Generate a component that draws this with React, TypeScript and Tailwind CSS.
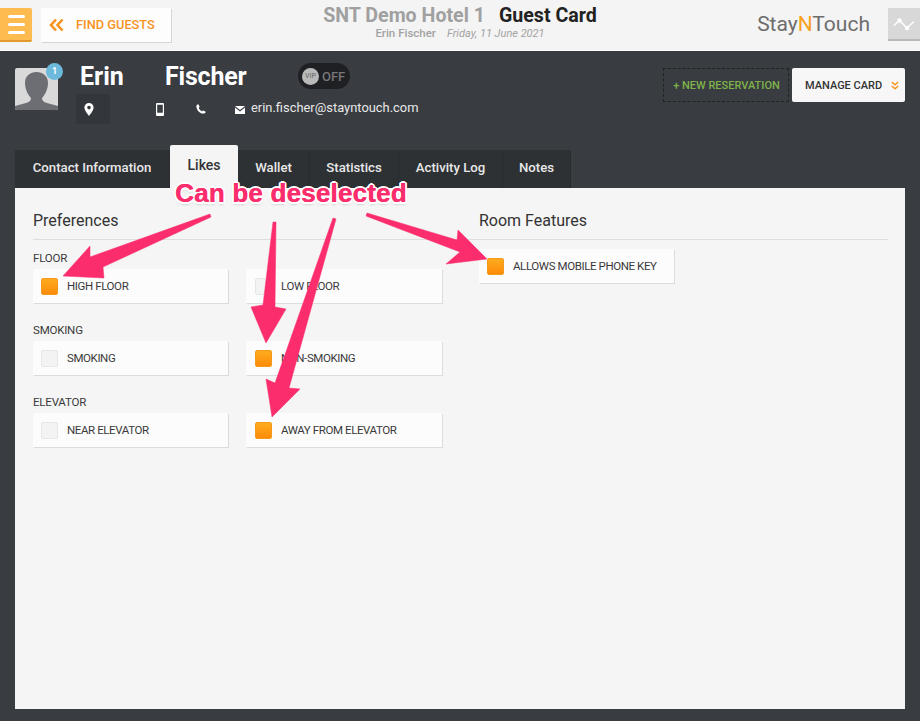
import React from "react";

const font = "font-['Roboto','Noto_Sans',sans-serif]";

function Check({ on }: { on?: boolean }) {
  return on ? (
    <span className="h-[17px] w-[17px] shrink-0 rounded-[2px] bg-gradient-to-b from-[#ffab1c] to-[#fb8b08] border border-[#f39a1d]" />
  ) : (
    <span className="h-[17px] w-[17px] shrink-0 rounded-[2px] bg-[#f3f3f3] border border-[#e6e6e6]" />
  );
}

function Card({ label, on }: { label: string; on?: boolean }) {
  return (
    <div className="flex h-[34px] items-center gap-[9px] whitespace-nowrap bg-[#fcfcfc] pl-2 pr-2 shadow-[1px_1px_0_#dcdcdc] text-[11.5px] leading-none tracking-[-0.4px] text-[#3a3a3a]">
      <Check on={on} />
      <span className="pt-[1px]">{label}</span>
    </div>
  );
}

function Group({ title, a, b }: { title: string; a: [string, boolean]; b: [string, boolean] }) {
  return (
    <div>
      <div className="h-[22px] pt-[3px] text-[11.5px] leading-[16px] tracking-[-0.2px] text-[#3a3a3a]">{title}</div>
      <div className="grid grid-cols-[195px_196px] gap-x-[18px] [&>*:last-child]:pl-[9px]">
        <Card label={a[0]} on={a[1]} />
        <Card label={b[0]} on={b[1]} />
      </div>
    </div>
  );
}

function Tab({ label, w, active }: { label: string; w: string; active?: boolean }) {
  return active ? (
    <div className={`${w} flex h-[43px] items-center justify-center rounded-t-[2px] bg-[#f5f5f5] pb-[3px] text-[14px] font-medium text-[#333]`}>{label}</div>
  ) : (
    <div className={`${w} flex h-[38px] items-center justify-center border-r border-[#292b2e] bg-[#2e3134] pb-[2px] text-[13.2px] font-medium text-[#e8e8e8]`}>{label}</div>
  );
}

function Arrows() {
  return (
    <svg className="pointer-events-none absolute left-0 top-0" width="920" height="721" viewBox="0 0 920 721">
      <g fill="#fb2d6d" stroke="#fb2d6d" strokeWidth="0.5" strokeLinejoin="round">
        <polygon points="210,214 211,217 103,267 104,278 63,276 90,246 90,257" />
        <polygon points="273,222 276,222 275,307 286,309 266,343 251,307 263,305" />
        <polygon points="333,218 336,219 289,388 300,389 272,417 266,379 275,383" />
        <polygon points="366,216 367,213 457,240 458,230 487,259 446,264 460,252" />
      </g>
    </svg>
  );
}

export default function App() {
  return (
    <div className={`${font} relative flex h-[721px] w-[920px] flex-col overflow-hidden bg-[#393c41]`}>
      {/* Top bar */}
      <header className="grid h-[51px] shrink-0 grid-cols-[1fr_auto_1fr] border-b border-b-white bg-[#f4f4f4]">
        <div className="flex items-start gap-[9px] pt-2">
          <div className="flex h-[34px] w-[32px] flex-col items-center justify-center gap-[5px] rounded-r-[2px] border-b-2 border-[#e09a30] bg-[#fdbb50]">
            <span className="h-[3px] w-[17px] rounded-full bg-white" />
            <span className="h-[3px] w-[17px] rounded-full bg-white" />
            <span className="h-[3px] w-[17px] rounded-full bg-white" />
          </div>
          <div className="flex h-[34px] w-[130px] items-center gap-[12px] bg-[#fdfdfd] pl-[8px] shadow-[1px_1px_0_#d5d5d5]">
            <svg width="15" height="14" viewBox="0 0 15 14" fill="none" stroke="#f7931e" strokeWidth="2.6" strokeLinejoin="miter">
              <path d="M7 1.5 2 7l5 5.5M13.5 1.5 8.5 7l5 5.5" />
            </svg>
            <span className="text-[12.8px] font-medium leading-none text-[#f7931e]">FIND GUESTS</span>
          </div>
        </div>
        <div className="flex flex-col items-center pt-[5px]">
          <div className="flex gap-[14px] text-[19.6px] font-bold leading-[22px]">
            <span className="text-[#a0a0a0]">SNT Demo Hotel 1</span>
            <span className="text-[#222]">Guest Card</span>
          </div>
          <div className="flex gap-[11px] text-[11.5px] leading-[13px] text-[#a3a3a3]">
            <span className="font-medium">Erin Fischer</span>
            <span className="italic text-[11px]">Friday, 11 June 2021</span>
          </div>
        </div>
        <div className="flex items-start justify-end gap-[18px] pt-2">
          <div className="pt-[3px] text-[21px] leading-[27px] text-[#6d6d6d]">
            Stay<span className="text-[#f7a11f]">N</span>Touch
          </div>
          <div className="flex h-[33px] w-[32px] items-center justify-center border-b-2 border-[#b9b9b9] bg-[#d8d8d8]">
            <svg width="22" height="14" viewBox="0 0 22 14" fill="none" stroke="#fff" strokeWidth="1.4">
              <path d="M1 8.5 6.5 3.5 14 11 21 4.5" />
              <circle cx="6.5" cy="3.5" r="1.5" fill="#fff" />
              <circle cx="14" cy="11" r="1.5" fill="#fff" />
            </svg>
          </div>
        </div>
      </header>

      {/* Guest head */}
      <section className="flex h-[94px] shrink-0 justify-between pl-[15px] pr-[15px]">
        <div className="flex">
          <div className="relative mt-[17px] h-[42px] w-[43px] shrink-0 overflow-hidden rounded-[2px] bg-[#d9d9d9]">
            <svg width="43" height="42" viewBox="0 0 43 42">
              <path d="M0 42V38l11-3c3-1 5-2 5-5-3-3-6-9-6-15C10 8 15 4 21.500 4S33 8 33 15c0 6-3 12-6 15 0 3 2 4 5 5l11 3v4Z" fill="#6c6e73" />
            </svg>
          </div>
          <div className="ml-[18px] pt-[9px]">
            <div className="flex h-[33px] items-center">
              <span className="w-[89px] pl-[4px] text-[25px] font-bold leading-none text-white">Erin</span>
              <span className="w-[133px] text-[25px] font-bold leading-none tracking-[-0.2px] text-white">Fischer</span>
              <div className="flex h-[26px] w-[52px] items-center gap-[3px] rounded-full bg-[#1f2023] pl-[4px] -mt-[1px]">
                <span className="flex h-[17px] w-[17px] items-center justify-center rounded-full bg-[#b9b9b9] text-[7px] leading-none text-[#666]">VIP</span>
                <span className="text-[13px] font-medium leading-none text-[#777]">OFF</span>
              </div>
            </div>
            <div className="mt-[1px] flex h-[30px] items-center">
              <div className="flex h-[30px] w-[34px] items-center pl-[8px] bg-[#33363a] rounded-[2px]">
                <svg width="10" height="13" viewBox="0 0 10 13"><path fillRule="evenodd" d="M5 0a4.600 4.600 0 0 1 4.600 4.600C9.600 7.800 5 13 5 13S.4 7.800.4 4.600A4.600 4.600 0 0 1 5 0Zm0 2.800a1.800 1.800 0 1 0 0 3.600 1.800 1.800 0 0 0 0-3.600Z" fill="#fff" /></svg>
              </div>
              <div className="ml-[46px] w-[40px]">
                <svg width="8" height="13" viewBox="0 0 8 13"><path fillRule="evenodd" d="M1 0h6a1 1 0 0 1 1 1v11a1 1 0 0 1-1 1H1a1 1 0 0 1-1-1V1a1 1 0 0 1 1-1Zm.2 1.800v8h5.600v-8H1.200Z" fill="#fff" /></svg>
              </div>
              <div className="w-[39px]">
                <svg width="10" height="10" viewBox="0 0 10 10"><path d="M2.300.3 3.600 2.800 2.700 3.900C3.300 5.300 4.700 6.700 6.100 7.300L7.200 6.400 9.700 7.700C9.500 8.900 8.500 9.700 7.300 9.600 3.700 9.200.8 6.300.4 2.700.3 1.500 1.100.5 2.300.3Z" fill="#fff" /></svg>
              </div>
              <svg width="10" height="8" viewBox="0 0 10 8" className="mt-[2px]"><path d="M0 0h10L5 4 0 0Zm0 1.600V8h10V1.600L5 5.600 0 1.600Z" fill="#fff" /></svg>
              <span className="ml-[6px] pb-[2px] text-[12.9px] leading-none text-[#e8e8e8]">erin.fischer@stayntouch.com</span>
            </div>
          </div>
        </div>
        <div className="flex items-start gap-[3px] pt-[17px]">
          <div className="flex h-[34px] w-[126px] items-center justify-center border border-dashed border-[#222] pl-[1px] text-[11px] font-medium leading-none text-[#7fb24a]">+ NEW RESERVATION</div>
          <div className="flex h-[34px] w-[113px] items-center gap-[9px] rounded-[2px] bg-[#f7f7f7] pl-[13px] text-[11px] font-medium leading-none text-[#333]">
            MANAGE CARD
            <svg width="8" height="9" viewBox="0 0 8 9" fill="none" stroke="#f7931e" strokeWidth="1.500"><path d="M.8 1 4 3.800 7.200 1M.8 5 4 7.800 7.200 5" /></svg>
          </div>
        </div>
      </section>

      {/* Tabs */}
      <nav className="flex h-[43px] shrink-0 items-end pl-[15px]">
        <Tab label="Contact Information" w="w-[155px]" />
        <Tab label="Likes" w="w-[68px]" active />
        <Tab label="Wallet" w="w-[72px]" />
        <Tab label="Statistics" w="w-[89px]" />
        <Tab label="Activity Log" w="w-[104px]" />
        <Tab label="Notes" w="w-[68px]" />
      </nav>

      {/* Panel */}
      <main className="mx-[15px] mb-[12px] flex-1 bg-[#f5f5f5] pl-[18px] pr-[17px] pt-[21px]">
        <div className="flex h-[31px] border-b border-[#dedede] text-[16px] leading-[24px] text-[#333]">
          <h2 className="w-[446px]">Preferences</h2>
          <h2>Room Features</h2>
        </div>
        <div className="flex">
          <div className="flex w-[446px] flex-col gap-[16px] pt-[7px]">
            <Group title="FLOOR" a={["HIGH FLOOR", true]} b={["LOW FLOOR", false]} />
            <Group title="SMOKING" a={["SMOKING", false]} b={["NON-SMOKING", true]} />
            <Group title="ELEVATOR" a={["NEAR ELEVATOR", false]} b={["AWAY FROM ELEVATOR", true]} />
          </div>
          <div className="w-[195px] pt-[9px]">
            <Card label="ALLOWS MOBILE PHONE KEY" on />
          </div>
        </div>
      </main>

      {/* Overlays */}
      <span className="absolute left-[46px] top-[63px] flex h-[17px] w-[17px] items-center justify-center rounded-full bg-[#6cb9dc] text-[9px] font-bold leading-none text-white">1</span>
      <Arrows />
      <div className="absolute left-[175px] top-[178px] font-['Liberation_Sans',sans-serif] text-[26px] font-bold leading-[30px] tracking-[0.2px] text-[#fb2d6d] [text-shadow:0.4px_0_0_#fb2d6d,2px_0_0_#fff,-2px_0_0_#fff,0_2px_0_#fff,0_-2px_0_#fff,1.500px_1.500px_0_#fff,-1.500px_1.500px_0_#fff,1.500px_-1.500px_0_#fff,-1.500px_-1.500px_0_#fff,0_2px_3px_rgba(0,0,0,0.3)]">
        Can be deselected
      </div>
    </div>
  );
}
